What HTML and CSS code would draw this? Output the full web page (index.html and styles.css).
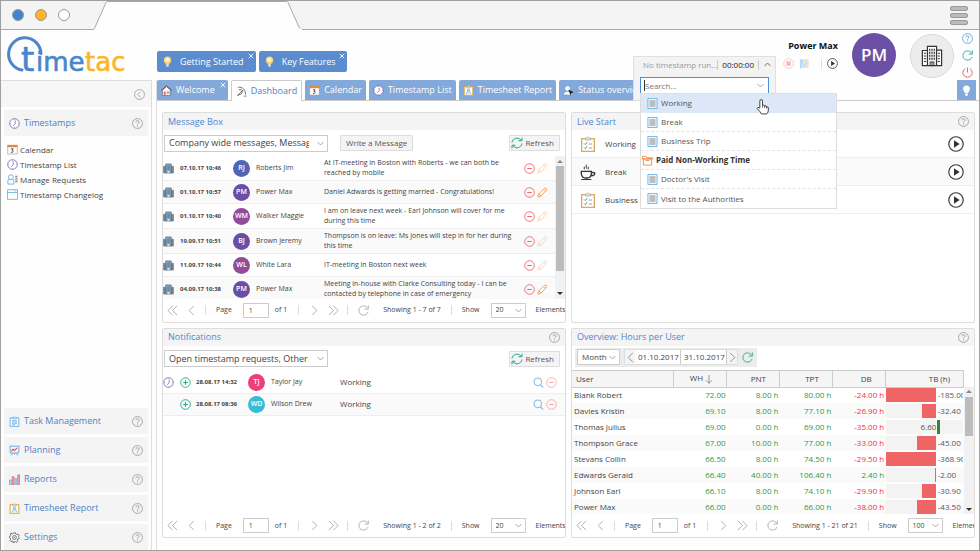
FILE: index.html
```html
<!DOCTYPE html>
<html lang="en">
<head>
<meta charset="utf-8">
<title>TimeTac Dashboard</title>
<link rel="stylesheet" href="styles.css">
</head>
<body>
<svg class="sprite" aria-hidden="true">
  <defs>
    <symbol id="clock" viewBox="0 0 24 24"><circle cx="12" cy="12" r="10.5" fill="#fff" stroke="#7c62b5" stroke-width="1.8"/><path d="M13.5 5.5v7L9 17" fill="none" stroke="#7c62b5" stroke-width="1.8"/><path d="M12 2v2M12 20v2M2 12h2M20 12h2" stroke="#7c62b5"/></symbol>
    <symbol id="calendar" viewBox="0 0 24 24"><path d="M1.5 3h21v19h-21z" fill="#fff" stroke="#999" stroke-width="1.4"/><path d="M1 2h22v5H1z" fill="#e08a3c"/><path d="M9 10.500h4.500l-2.500 3.200c4 0 4 5.300-2.500 4.300" fill="none" stroke="#444" stroke-width="2"/></symbol>
    <symbol id="requests" viewBox="0 0 24 24"><circle cx="8.500" cy="7" r="5.300" fill="#fff" stroke="#58a6dd" stroke-width="1.800"/><path d="M2 22v-7q0-3 3-3h7q3 0 3 3v7z" fill="#fff" stroke="#58a6dd" stroke-width="1.800"/><path d="M18 5h5M18 9h5M18 13h5M18 17h5" stroke="#666" stroke-width="2"/></symbol>
    <symbol id="window" viewBox="0 0 24 24"><path d="M1 1.500h22v21H1zM1 7.500h22" fill="#fff" stroke="#58b0e0" stroke-width="1.800"/><path d="M17 4.500h3" stroke="#58b0e0" stroke-width="1.500"/></symbol>
    <symbol id="tasks" viewBox="0 0 24 24"><path d="M2.500 4h19v18.500h-19z" fill="#fff" stroke="#58a6dd" stroke-width="1.800"/><path d="M8 6V3h2q2-3 4 0h2v3z" fill="#fff" stroke="#58a6dd" stroke-width="1.500"/><path d="M6.500 10h11M6.500 13h11M6.500 16h11M6.500 19h7" stroke="#58a6dd" stroke-width="1.600"/></symbol>
    <symbol id="planning" viewBox="0 0 24 24"><path d="M1 2.500h22M2.500 3v14.500h19V3M8 18l-3 5M16 18l3 5M12 18v3" fill="none" stroke="#58a6dd" stroke-width="1.900"/><path d="M5 13.500l4-4.500 3 3 6-6" fill="none" stroke="#e33d3d" stroke-width="2.200"/></symbol>
    <symbol id="reports" viewBox="0 0 24 24"><g stroke-width="1.600"><path d="M1 13h4v10H1z" fill="#c8e1f4" stroke="#58a6dd"/><path d="M7 6h4v17H7z" fill="#f7b0b0" stroke="#e85b5b"/><path d="M13 10h4v13h-4z" fill="#c8e1f4" stroke="#58a6dd"/><path d="M19 2h4v21h-4z" fill="#f7b0b0" stroke="#e85b5b"/></g></symbol>
    <symbol id="sheet" viewBox="0 0 24 24"><path d="M2.500 4h19v18.500h-19z" fill="#fff" stroke="#d9a441" stroke-width="2.200"/><path d="M8 6V3h2q2-3 4 0h2v3z" fill="#f3ddb0" stroke="#d9a441" stroke-width="1.300"/><circle cx="12" cy="11" r="2.700" fill="#e1effa" stroke="#58a6dd" stroke-width="1.500"/><path d="M7.500 20q0-6 4.500-6t4.500 6" fill="#e1effa" stroke="#58a6dd" stroke-width="1.500"/></symbol>
    <symbol id="gear" viewBox="0 0 24 24"><path d="M10 1.500h4l.7 3 2.300 1 2.700-1.700 2.700 2.700L20.700 9l1 2.300v3.400l-3 .8-1 2.300 1.500 2.500-2.700 2-2.500-1.800-2 .7-.7 1.600h-2.600L9 20l-2.300-1-2.500 1.500-2-2.500 1.500-2.700-1-2.300-1.500-.7v-2.600l2-.7 1-2.300L2.600 4.200l2-2L7 4l2.300-1z" transform="translate(0 .3)" fill="#fff" stroke="#555" stroke-width="1.800" stroke-linejoin="round"/><circle cx="12" cy="12" r="4.200" fill="#fff" stroke="#555" stroke-width="1.800"/><circle cx="12" cy="12" r="1.300" fill="#555"/></symbol>
    <symbol id="help" viewBox="0 0 24 24"><circle cx="12" cy="12" r="10.800" fill="none" stroke="currentColor" stroke-width="1.800"/><path d="M8.500 9.500c0-5 7.200-4.500 7-.3-.2 2.600-3.400 2.400-3.400 5.300" fill="none" stroke="currentColor" stroke-width="2"/><circle cx="12.100" cy="17.700" r="1.400" fill="currentColor"/></symbol>
    <symbol id="collapse" viewBox="0 0 24 24"><circle cx="12" cy="12" r="10.800" fill="none" stroke="currentColor" stroke-width="1.700"/><path d="M14 6l-6 6 6 6" fill="none" stroke="currentColor" stroke-width="1.800"/></symbol>
    <symbol id="bulb" viewBox="0 0 24 24"><circle cx="12" cy="9" r="8" fill="#fbd276"/><path d="M8 14h8l-1 5H9z" fill="#fbd276"/><circle cx="12" cy="8.500" r="4.500" fill="#fff3c9"/><path d="M9 18h6v4l-2 1.500h-2L9 22z" fill="#eee"/><path d="M9 20h6" stroke="#999"/></symbol>
    <symbol id="bulbw" viewBox="0 0 24 24"><path d="M8.500 18c0-4-4-5-4-10 0-9.500 15-9.500 15 0 0 5-4 6-4 10zM9 19h6v3l-2 2h-2l-2-2z" fill="#fff"/></symbol>
    <symbol id="home" viewBox="0 0 24 24"><path d="M3 11l9-8 9 8v12H3z" fill="#fff" stroke="#666" stroke-width="1.500"/><path d="M1 12L12 2l11 10" fill="none" stroke="#8f5a55" stroke-width="2.500"/><path d="M6 14h4v9H6z" fill="#e46a5a"/><path d="M13 14h6v5h-6z" fill="#a9cef0" stroke="#d76" /></symbol>
    <symbol id="dash" viewBox="0 0 24 24"><path d="M4 3C14 1 21 8 21 19M6 8q7-1 10 4M3 21L14 10M3 21l9-4 2-7" fill="none" stroke="#555" stroke-width="1.700"/><path d="M17 22h6" stroke="#555" stroke-width="1.500"/></symbol>
    <symbol id="status" viewBox="0 0 24 24"><circle cx="10" cy="7.500" r="6" fill="#fff" stroke="#4d9bd8" stroke-width="1.300"/><path d="M1 22q0-8 9-8t9 8z" fill="#fff" stroke="#4d9bd8" stroke-width="1.300"/><path d="M12 10l11 6-5 2-2 5z" fill="#222"/></symbol>
    <symbol id="company" viewBox="0 0 24 24"><path d="M1 7h6v15H1zM17 7h6v15h-6z" fill="#77828c" stroke="#5f6870"/><path d="M6 2h12v20H6z" fill="#88a9c4" stroke="#5f6870" stroke-width="1.500"/><path d="M9 5v12M12 5v12M15 5v12" stroke="#4f7190" stroke-width="1.200"/><path d="M10 17h4v5h-4z" fill="#ddd"/></symbol>
    <symbol id="refresh" viewBox="0 0 24 24"><path d="M2 11C3 3 14-1 20 6M22 1v6.500h-7M22 13c-1 8-12 12-18 5M2 23v-6.500h7" fill="none" stroke="#25a68c" stroke-width="2"/></symbol>
    <symbol id="reload" viewBox="0 0 24 24"><path d="M21.500 7.500C17-1 2 .5 2 12c0 12 17 13.500 20 3M22.500 1v8h-8" fill="none" stroke="currentColor" stroke-width="1.900"/></symbol>
    <symbol id="minus" viewBox="0 0 24 24"><circle cx="12" cy="12" r="10.500" fill="none" stroke="#f0666a" stroke-width="2"/><path d="M7 12h10" stroke="#f0666a" stroke-width="2.300"/></symbol>
    <symbol id="plus" viewBox="0 0 24 24"><circle cx="12" cy="12" r="10.500" fill="none" stroke="#27a58b" stroke-width="2"/><path d="M7 12h10M12 7v10" stroke="#27a58b" stroke-width="2.500"/></symbol>
    <symbol id="pencil" viewBox="0 0 24 24"><path d="M2 22l2-7L17 2.500q4-1 4.500 3.500L9 19.500zM14.500 5l4.500 4.500M4 15l5 4.500" fill="#fff" stroke="#f1974c" stroke-width="1.900"/></symbol>
    <symbol id="search" viewBox="0 0 24 24"><circle cx="10.500" cy="10.500" r="8.500" fill="none" stroke="#77b1e6" stroke-width="2"/><path d="M16.500 17l5.500 5.500" stroke="#77b1e6" stroke-width="2.200"/></symbol>
    <symbol id="play" viewBox="0 0 24 24"><circle cx="12" cy="12" r="10.800" fill="#fff" stroke="#333" stroke-width="1.700"/><path d="M9 6.500l8.500 5.500L9 17.500z" fill="#333"/></symbol>
    <symbol id="check" viewBox="0 0 24 24"><path d="M2.500 4h19v19h-19z" fill="#fff" stroke="#d9ab60" stroke-width="2"/><path d="M8 6V3h2q2-4 4 0h2v3z" fill="#f6e4c4" stroke="#aaa" stroke-width="1.200"/><path d="M6 11l2 2 3-4M6 17l2 2 3-4" fill="none" stroke="#35b59a" stroke-width="1.500"/><path d="M13 12h5M13 18h5" stroke="#999" stroke-width="1.400"/></symbol>
    <symbol id="cup" viewBox="0 0 24 24"><path d="M2 11h15v4q-1 6-6 6H8q-5 0-6-6zM17 13q6-1 5 2-1 3-6 2.500M2 23.500h15" fill="none" stroke="#333" stroke-width="2"/><path d="M7 8q-2-2 0-4M10 7q-2-3 0-6M13 8q-2-2 0-4" fill="none" stroke="#333" stroke-width="1.400"/></symbol>
    <symbol id="task" viewBox="0 0 24 24"><path d="M2 1h20v22H2z" fill="#eef6fd" stroke="#6bb0e6" stroke-width="2"/><path d="M5.500 4.500h13v15h-13z" fill="#bdbdbd"/></symbol>
    <symbol id="folder" viewBox="0 0 24 24"><path d="M3 8v14h18V8zM1 3h8l2 3h12v3H1zM8 12h8" fill="#fff" stroke="#f08c45" stroke-width="2"/></symbol>
    <symbol id="power" viewBox="0 0 24 24"><path d="M7 3.500C-2 9 1 22 12 22S26 9 17 3.500M12 1v11" fill="none" stroke="#ef5f60" stroke-width="2.100"/></symbol>
    <symbol id="stop" viewBox="0 0 24 24"><circle cx="12" cy="12" r="10.500" fill="#fff" stroke="#f7c4c5" stroke-width="2"/><path d="M7 7h10v10H7z" fill="#f7b9ba"/></symbol>
    <symbol id="edit" viewBox="0 0 24 24"><path d="M2 3h8v20H2z" fill="#b9daf1"/><path d="M9 2h12v20H8z" fill="#f6dfc6"/><path d="M7 18L17 5l4 3L11 21l-5 2z" fill="#b4d6ef" stroke="#fff" stroke-width="1.500"/></symbol>
    <symbol id="building" viewBox="0 0 24 24"><path d="M7 1.500h10v21H7zM1.500 6H7M1.500 5.500v17h21v-17H17" fill="#fff" stroke="#333" stroke-width="1.300"/><path d="M9.500 4v13M12 4v13M14.500 4v13M3.200 9h2.500M3.200 12h2.500M3.200 15h2.500M3.200 18h2.500M18.300 9h2.500M18.300 12h2.500M18.300 15h2.500M18.300 18h2.500" stroke="#333" stroke-width="1.300" stroke-dasharray="2.300 1"/><path d="M10 18.500h4v4h-4zM12 18.500v4" fill="none" stroke="#333"/></symbol>
    <symbol id="down" viewBox="0 0 12 12"><path d="M1 3.500l5 5 5-5" fill="none" stroke="currentColor" stroke-width="1.500"/></symbol>
    <symbol id="up" viewBox="0 0 12 12"><path d="M1 8.500l5-5 5 5" fill="none" stroke="currentColor" stroke-width="1.600"/></symbol>
    <symbol id="prev" viewBox="0 0 12 12"><path d="M8.500 1l-5 5 5 5" fill="none" stroke="currentColor"/></symbol>
    <symbol id="next" viewBox="0 0 12 12"><path d="M3.500 1l5 5-5 5" fill="none" stroke="currentColor"/></symbol>
    <symbol id="first" viewBox="0 0 12 12"><path d="M6 1L1 6l5 5M11 1L6 6l5 5" fill="none" stroke="currentColor"/></symbol>
    <symbol id="last" viewBox="0 0 12 12"><path d="M6 1l5 5-5 5M1 1l5 5-5 5" fill="none" stroke="currentColor"/></symbol>
    <symbol id="close" viewBox="0 0 12 12"><path d="M1.500 1.500l9 9M10.500 1.500l-9 9" stroke="#fff" stroke-width="1.800"/></symbol>
  </defs>
</svg>

<div class="browser">
  <svg class="browser-tab" viewBox="0 0 210 29" aria-hidden="true"><path d="M0 28.500L1 28.500 13 1.500Q13.500.500 15 .500H193Q194.500.500 195 1.500L206 26Q207 28.500 209 28.500" fill="#fefefe" stroke="#a8a8a8"/><path d="M1 28.500h208" stroke="#fefefe" stroke-width="1.500"/></svg>
  <span class="dot blue"></span><span class="dot amber"></span><span class="dot white"></span>
  <span class="burger"><i></i><i></i><i></i></span>
</div>

<div class="app">
  <header class="header">
    <a class="logo" href="#" aria-label="timetac">
      <svg viewBox="0 0 120 40" role="img" aria-label="timetac">
        <path d="M15 35A16.200 16.200 0 1 1 34 18.500" fill="none" stroke="#4a86cb" stroke-width="3" stroke-linecap="round"/>
        <text x="14" y="36" class="logo-t">t</text>
        <text x="29" y="36" class="logo-ime">ime</text>
        <text x="78" y="36" class="logo-tac">tac</text>
      </svg>
    </a>
    <div class="guides">
      <button class="guide"><svg class="ic"><use href="#bulb"/></svg>Getting Started<svg class="x"><use href="#close"/></svg></button>
      <button class="guide"><svg class="ic"><use href="#bulb"/></svg>Key Features<svg class="x"><use href="#close"/></svg></button>
    </div>
    <div class="timer-slot">
      <section class="timer" aria-label="Timer">
        <div class="timer-head"><span class="timer-state">No timestamp run...</span><span class="timer-clock">00:00:00</span><button class="plain" aria-label="Close timer"><svg class="chev"><use href="#up"/></svg></button></div>
        <div class="combo"><input type="text" placeholder="Search..." aria-label="Search task"><svg class="chev"><use href="#down"/></svg></div>
        <ul class="options">
          <li class="option active"><svg class="ic"><use href="#task"/></svg>Working</li>
          <li class="option"><svg class="ic"><use href="#task"/></svg>Break</li>
          <li class="option"><svg class="ic"><use href="#task"/></svg>Business Trip</li>
          <li class="option group"><svg class="ic"><use href="#folder"/></svg>Paid Non-Working Time</li>
          <li class="option"><svg class="ic"><use href="#task"/></svg>Doctor's Visit</li>
          <li class="option"><svg class="ic"><use href="#task"/></svg>Visit to the Authorities</li>
        </ul>
        <svg class="hand" viewBox="0 0 24 30" aria-hidden="true"><path d="M7 17V4q0-3 2.500-3T12 4v8q3-2 4 1 3-1 3.500 1.500Q23 14 23 17v4q0 4-3 7H10q-2-4-8-10 0-4 5-1z" fill="#fff" stroke="#333" stroke-width="1.700" stroke-linejoin="round"/><path d="M12 12v4M16 13v4M19.500 14.500V18" stroke="#333" stroke-width="1.400"/></svg>
      </section>
    </div>
    <div class="user">
      <strong>Power Max</strong>
      <div class="controls"><button class="plain" aria-label="Stop"><svg class="ic"><use href="#stop"/></svg></button><button class="plain" aria-label="Edit"><svg class="ic"><use href="#edit"/></svg></button><span class="rule"></span><button class="plain" aria-label="Start"><svg class="ic"><use href="#play"/></svg></button></div>
    </div>
    <span class="face">PM</span>
    <span class="firm"><svg><use href="#building"/></svg></span>
    <div class="tools">
      <button class="plain t-blue" aria-label="Help"><svg class="ic"><use href="#help"/></svg></button>
      <button class="plain t-green" aria-label="Reload"><svg class="ic"><use href="#reload"/></svg></button>
      <button class="plain" aria-label="Log out"><svg class="ic"><use href="#power"/></svg></button>
    </div>
  </header>

  <div class="main">
    <nav class="side">
      <div class="side-top"><button class="plain grey" aria-label="Collapse"><svg class="ic"><use href="#collapse"/></svg></button></div>
      <div class="module"><svg class="ic"><use href="#clock"/></svg><a href="#">Timestamps</a><svg class="ic grey"><use href="#help"/></svg></div>
      <ul class="links">
        <li><svg class="ic"><use href="#calendar"/></svg><a href="#">Calendar</a></li>
        <li><svg class="ic"><use href="#clock"/></svg><a href="#">Timestamp List</a></li>
        <li><svg class="ic"><use href="#requests"/></svg><a href="#">Manage Requests</a></li>
        <li><svg class="ic"><use href="#window"/></svg><a href="#">Timestamp Changelog</a></li>
      </ul>
      <div class="module"><svg class="ic"><use href="#tasks"/></svg><a href="#">Task Management</a><svg class="ic grey"><use href="#help"/></svg></div>
      <div class="module"><svg class="ic"><use href="#planning"/></svg><a href="#">Planning</a><svg class="ic grey"><use href="#help"/></svg></div>
      <div class="module"><svg class="ic"><use href="#reports"/></svg><a href="#">Reports</a><svg class="ic grey"><use href="#help"/></svg></div>
      <div class="module"><svg class="ic"><use href="#sheet"/></svg><a href="#">Timesheet Report</a><svg class="ic grey"><use href="#help"/></svg></div>
      <div class="module"><svg class="ic"><use href="#gear"/></svg><a href="#">Settings</a><svg class="ic grey"><use href="#help"/></svg></div>
    </nav>

    <div class="content">
      <div class="tabs">
        <button class="tab closable"><svg class="ic"><use href="#home"/></svg>Welcome<svg class="x"><use href="#close"/></svg></button>
        <button class="tab current"><svg class="ic"><use href="#dash"/></svg>Dashboard</button>
        <button class="tab"><svg class="ic"><use href="#calendar"/></svg>Calendar</button>
        <button class="tab"><svg class="ic"><use href="#clock"/></svg>Timestamp List</button>
        <button class="tab"><svg class="ic"><use href="#sheet"/></svg>Timesheet Report</button>
        <button class="tab"><svg class="ic"><use href="#status"/></svg>Status overview</button>
        <button class="tab tip" aria-label="Tips"><svg class="ic"><use href="#bulbw"/></svg></button>
      </div>

      <div class="board">
        <section class="panel">
          <h2>Message Box</h2>
          <div class="bar">
            <label class="pick wide"><select aria-label="Message filter"><option>Company wide messages, Messages to me</option></select><svg class="chev"><use href="#down"/></svg></label>
            <button class="btn">Write a Message</button>
            <button class="btn end"><svg class="ic"><use href="#refresh"/></svg>Refresh</button>
          </div>
          <div class="scroller">
            <ul class="messages">
              <li><svg class="ic"><use href="#company"/></svg><time>07.10.17 10:46</time><span class="pic indigo">RJ</span><span class="who">Roberts Jim</span><p>At IT-meeting in Boston with Roberts - we can both be reached by mobile</p><svg class="ic"><use href="#minus"/></svg><svg class="ic dim"><use href="#pencil"/></svg></li>
              <li><svg class="ic"><use href="#company"/></svg><time>01.10.17 10:57</time><span class="pic violet">PM</span><span class="who">Power Max</span><p>Daniel Adwards is getting married - Congratulations!</p><svg class="ic"><use href="#minus"/></svg><svg class="ic"><use href="#pencil"/></svg></li>
              <li><svg class="ic"><use href="#company"/></svg><time>01.10.17 10:40</time><span class="pic plum">WM</span><span class="who">Walker Maggie</span><p>I am on leave next week - Earl Johnson will cover for me during this time</p><svg class="ic"><use href="#minus"/></svg><svg class="ic dim"><use href="#pencil"/></svg></li>
              <li><svg class="ic"><use href="#company"/></svg><time>19.09.17 10:51</time><span class="pic violet">BJ</span><span class="who">Brown Jeremy</span><p>Thompson is on leave: Ms Jones will step in for her during this time</p><svg class="ic"><use href="#minus"/></svg><svg class="ic dim"><use href="#pencil"/></svg></li>
              <li><svg class="ic"><use href="#company"/></svg><time>11.09.17 10:44</time><span class="pic plum">WL</span><span class="who">White Lara</span><p>IT-meeting in Boston next week</p><svg class="ic"><use href="#minus"/></svg><svg class="ic dim"><use href="#pencil"/></svg></li>
              <li><svg class="ic"><use href="#company"/></svg><time>04.09.17 10:38</time><span class="pic violet">PM</span><span class="who">Power Max</span><p>Meeting in-house with Clarke Consulting today - I can be contacted by telephone in case of emergency</p><svg class="ic"><use href="#minus"/></svg><svg class="ic"><use href="#pencil"/></svg></li>
            </ul>
            <div class="track"><span class="arrow top"></span><span class="thumb long"></span><span class="arrow bottom"></span></div>
          </div>
          <div class="pager">
            <button class="plain" aria-label="First"><svg class="nav"><use href="#first"/></svg></button><button class="plain" aria-label="Previous"><svg class="nav"><use href="#prev"/></svg></button><span class="rule"></span>
            <label class="page">Page<input type="text" value="1"></label><span class="of">of 1</span><span class="rule"></span>
            <button class="plain" aria-label="Next"><svg class="nav"><use href="#next"/></svg></button><button class="plain" aria-label="Last"><svg class="nav"><use href="#last"/></svg></button><span class="rule"></span>
            <button class="plain" aria-label="Reload"><svg class="ic"><use href="#reload"/></svg></button><span class="showing">Showing 1 - 7 of 7</span><span class="rule"></span>
            <label class="page show">Show<span class="pick"><select><option>20</option></select><svg class="chev"><use href="#down"/></svg></span></label><span class="units">Elements</span>
          </div>
        </section>

        <section class="panel">
          <h2>Live Start<svg class="ic grey"><use href="#help"/></svg></h2>
          <ul class="starts">
            <li><svg class="ic"><use href="#check"/></svg><span>Working</span><button class="plain" aria-label="Start Working"><svg class="ic go"><use href="#play"/></svg></button></li>
            <li><svg class="ic"><use href="#cup"/></svg><span>Break</span><button class="plain" aria-label="Start Break"><svg class="ic go"><use href="#play"/></svg></button></li>
            <li><svg class="ic"><use href="#check"/></svg><span>Business Trip</span><button class="plain" aria-label="Start Business Trip"><svg class="ic go"><use href="#play"/></svg></button></li>
          </ul>
        </section>

        <section class="panel">
          <h2>Notifications<svg class="ic grey"><use href="#help"/></svg></h2>
          <div class="bar">
            <label class="pick wide"><select aria-label="Notification filter"><option>Open timestamp requests, Other requests</option></select><svg class="chev"><use href="#down"/></svg></label>
            <button class="btn end"><svg class="ic"><use href="#refresh"/></svg>Refresh</button>
          </div>
          <ul class="notes">
            <li><svg class="ic"><use href="#clock"/></svg><svg class="ic"><use href="#plus"/></svg><time>28.08.17 14:32</time><span class="pic pink">TJ</span><span class="who">Taylor Jay</span><p>Working</p><svg class="ic"><use href="#search"/></svg><svg class="ic faint"><use href="#minus"/></svg></li>
            <li><span></span><svg class="ic"><use href="#plus"/></svg><time>28.08.17 08:36</time><span class="pic cyan">WD</span><span class="who">Wilson Drew</span><p>Working</p><svg class="ic"><use href="#search"/></svg><svg class="ic faint"><use href="#minus"/></svg></li>
          </ul>
          <div class="pager">
            <button class="plain" aria-label="First"><svg class="nav"><use href="#first"/></svg></button><button class="plain" aria-label="Previous"><svg class="nav"><use href="#prev"/></svg></button><span class="rule"></span>
            <label class="page">Page<input type="text" value="1"></label><span class="of">of 1</span><span class="rule"></span>
            <button class="plain" aria-label="Next"><svg class="nav"><use href="#next"/></svg></button><button class="plain" aria-label="Last"><svg class="nav"><use href="#last"/></svg></button><span class="rule"></span>
            <button class="plain" aria-label="Reload"><svg class="ic"><use href="#reload"/></svg></button><span class="showing">Showing 1 - 2 of 2</span><span class="rule"></span>
            <label class="page show">Show<span class="pick"><select><option>20</option></select><svg class="chev"><use href="#down"/></svg></span></label><span class="units">Elements</span>
          </div>
        </section>

        <section class="panel">
          <h2>Overview: Hours per User<svg class="ic grey"><use href="#help"/></svg></h2>
          <div class="range">
            <label class="pick"><select aria-label="Period"><option>Month</option></select><svg class="chev"><use href="#down"/></svg></label>
            <div class="dates"><button class="plain" aria-label="Earlier"><svg class="nav"><use href="#prev"/></svg></button><input type="text" value="01.10.2017" aria-label="From"><input type="text" value="31.10.2017" aria-label="To"><button class="plain" aria-label="Later"><svg class="nav"><use href="#next"/></svg></button></div>
            <button class="plain t-green" aria-label="Reload"><svg class="ic"><use href="#reload"/></svg></button>
          </div>
          <div class="scroller">
            <table class="hours">
              <thead><tr><th>User</th><th>WH<svg class="sort" viewBox="0 0 10 12"><path d="M5 0v11M1 7l4 4 4-4" fill="none" stroke="#777"/></svg></th><th>PNT</th><th>TPT</th><th>DB</th><th>TB (h)</th></tr></thead>
              <tbody>
                <tr><td>Blank Robert</td><td>72.00</td><td>8.00 h</td><td>80.00 h</td><td class="neg">-24.00 h</td><td><div class="balance"><span class="lane"><i style="width:100%"></i></span><b>-185.00</b></div></td></tr>
                <tr><td>Davies Kristin</td><td>69.10</td><td>8.00 h</td><td>77.10 h</td><td class="neg">-26.90 h</td><td><div class="balance"><span class="lane"><i style="width:28%"></i></span><b>-32.40</b></div></td></tr>
                <tr><td>Thomas Julius</td><td>69.00</td><td>0.00 h</td><td>69.00 h</td><td class="neg">-35.00 h</td><td><div class="balance plus"><span class="lane">6.60</span><b><i style="width:12%"></i></b></div></td></tr>
                <tr><td>Thompson Grace</td><td>67.00</td><td>10.00 h</td><td>77.00 h</td><td class="neg">-33.00 h</td><td><div class="balance"><span class="lane"><i style="width:38%"></i></span><b>-45.00</b></div></td></tr>
                <tr><td>Stevans Collin</td><td>66.50</td><td>8.00 h</td><td>74.50 h</td><td class="neg">-29.50 h</td><td><div class="balance"><span class="lane"><i style="width:100%"></i></span><b>-368.90</b></div></td></tr>
                <tr><td>Edwards Gerald</td><td>66.40</td><td>40.00 h</td><td>106.40 h</td><td>2.40 h</td><td><div class="balance"><span class="lane"><i style="width:2%"></i></span><b>-2.00</b></div></td></tr>
                <tr><td>Johnson Earl</td><td>66.10</td><td>8.00 h</td><td>74.10 h</td><td class="neg">-29.90 h</td><td><div class="balance"><span class="lane"><i style="width:27%"></i></span><b>-30.90</b></div></td></tr>
                <tr><td>Power Max</td><td>66.00</td><td>0.00 h</td><td>66.00 h</td><td class="neg">-38.00 h</td><td><div class="balance"><span class="lane"><i style="width:37%"></i></span><b>-43.50</b></div></td></tr>
              </tbody>
            </table>
            <div class="track below"><span class="arrow top"></span><span class="thumb short"></span><span class="arrow bottom"></span></div>
          </div>
          <div class="pager">
            <button class="plain" aria-label="First"><svg class="nav"><use href="#first"/></svg></button><button class="plain" aria-label="Previous"><svg class="nav"><use href="#prev"/></svg></button><span class="rule"></span>
            <label class="page">Page<input type="text" value="1"></label><span class="of">of 1</span><span class="rule"></span>
            <button class="plain" aria-label="Next"><svg class="nav"><use href="#next"/></svg></button><button class="plain" aria-label="Last"><svg class="nav"><use href="#last"/></svg></button><span class="rule"></span>
            <button class="plain" aria-label="Reload"><svg class="ic"><use href="#reload"/></svg></button><span class="showing">Showing 1 - 21 of 21</span><span class="rule"></span>
            <label class="page show">Show<span class="pick"><select><option>100</option></select><svg class="chev"><use href="#down"/></svg></span></label><span class="units">Elements</span>
          </div>
        </section>
      </div>
    </div>
  </div>
</div>
</body>
</html>
```
FILE: styles.css
```css
* { box-sizing: border-box; }
body { margin: 0; height: 100vh; display: flex; flex-direction: column; background: #fefefe; color: #444; font: 8px/10px "Open Sans", "Noto Sans", sans-serif; border: 1px solid #a0a0a0; overflow: hidden; }
ul { list-style: none; margin: 0; padding: 0; }
p, h2 { margin: 0; font-weight: 400; }
a { color: inherit; text-decoration: none; }
button, input, select { font: inherit; color: inherit; margin: 0; }
svg { display: block; flex: none; }
.sprite { position: absolute; width: 0; height: 0; }
.ic { width: 11px; height: 11px; }
.chev { width: 7px; height: 7px; color: #999; }
.nav { width: 11px; height: 11px; }
.grey { color: #999; }
.plain { border: 0; padding: 0; background: none; display: flex; align-items: center; justify-content: center; }
.rule { width: 1px; height: 10px; background: #ddd; }

/* Browser frame */
.browser { flex: none; position: relative; display: flex; align-items: center; gap: 11px; height: 29px; padding: 0 11px; background: #f4f4f4; border-bottom: 1px solid #a8a8a8; }
.browser-tab { position: absolute; left: 92px; top: 0; width: 210px; height: 29px; }
.dot { width: 12px; height: 12px; border-radius: 50%; border: 1px solid #999; }
.blue { background: #4283cf; }
.amber { background: #fdb528; }
.white { background: #fff; }
.burger { margin-left: auto; display: grid; gap: 2px; }
.burger i { width: 18px; height: 5px; background: #bbb; border: 1px solid #999; border-radius: 2px; }

.app { flex: 1; min-height: 0; display: flex; flex-direction: column; }

/* Header */
.header { flex: none; display: flex; height: 50px; padding: 0 3px 0 6px; }
.logo { width: 120px; padding-top: 5px; }
.logo svg { width: 120px; height: 40px; overflow: visible; }
.logo-t, .logo-ime, .logo-tac { font: 26px "DejaVu Sans", sans-serif; fill: #4a86cb; stroke: #4a86cb; stroke-width: .6; stroke-linejoin: round; }
.logo-t { font-size: 34px; }
.logo-tac { fill: #fdb528; stroke: #fdb528; }
.guides { display: flex; align-items: flex-start; gap: 3px; margin: 21px auto 0 30px; }
.guide { position: relative; display: flex; align-items: center; gap: 7px; height: 21px; padding: 0 12px 0 5px; border: 0; border-radius: 2px; background: #5b8ccf; color: #fff; font-size: 9px; }
.x { position: absolute; right: 2px; top: 2px; width: 6px; height: 6px; }
.timer-slot { position: relative; width: 143px; }
.timer { position: absolute; z-index: 2; left: 0; top: 26px; width: 143px; height: 45px; padding: 0 6px; background: #f3f3f3; border: 1px solid #e0e0e0; }
.timer-head { display: flex; align-items: center; height: 15px; margin-bottom: 5px; }
.timer-state { flex: 1; padding-left: 3px; color: #999; white-space: nowrap; overflow: hidden; }
.timer-clock { padding: 0 4px; border: solid #ccc; border-width: 0 1px; color: #222; }
.timer-head .plain { width: 16px; margin-right: -6px; }
.timer-head .chev { color: #666; }
.combo { display: flex; align-items: center; height: 17px; padding: 0 4px 0 3px; border: 1px solid #4a90d9; background: #fff; }
.combo input { flex: 1; min-width: 0; border: 0; padding: 0; outline: 0; background: none; border-left: 1px solid #333; height: 11px; }
.options { position: absolute; left: 6px; top: 36px; width: 197px; background: #fff; border: 1px solid #ddd; }
.option { display: flex; align-items: center; gap: 3px; height: 19px; padding-left: 6px; border-bottom: 1px dashed #e4e4e4; color: #555; }
.option:last-child { border: 0; }
.option.active { background: #dce7f7; border-color: #dce7f7; }
.option.group { padding-left: 1px; font-weight: 700; color: #333; }
.hand { position: absolute; left: 122px; top: 42px; width: 13px; height: 16px; }
.user { width: 55px; margin: 11px 14px 0 7px; text-align: right; color: #111; font-size: 9px; }
.controls { display: flex; align-items: center; justify-content: space-between; margin-top: 7px; }
.controls .rule { margin-left: 6px; }
.face, .firm { width: 44px; height: 44px; margin-top: 3px; border-radius: 50%; display: flex; align-items: center; justify-content: center; flex: none; }
.face { margin-right: 14px; background: #6c50a5; color: #fff; font-size: 17px; font-weight: 600; }
.firm { margin-right: 4px; margin-top: 4px; background: #ededed; border: 1px solid #d8d8d8; }
.firm svg { width: 22px; height: 22px; }
.tools { width: 18px; display: flex; flex-direction: column; align-items: center; gap: 6px; padding-top: 3px; }
.t-blue { color: #5a9fe0; }
.t-green { color: #25a68c; }

/* Sidebar */
.main { flex: 1; min-height: 0; display: grid; grid-template-columns: 151px minmax(0, 1fr); column-gap: 4px; }
.side { display: flex; flex-direction: column; gap: 3px; min-height: 0; border: solid #ddd; border-width: 1px 1px 0 0; }
.side-top { display: flex; align-items: center; justify-content: flex-end; height: 26px; flex: none; padding-right: 6px; background: #f6f6f6; }
.module { display: flex; align-items: center; gap: 4px; flex: none; height: 26px; margin: 0 3px; padding: 0 5px; background: #f4f4f4; color: #4f80c4; font-size: 9px; }
.module a { flex: 1; }
.links { flex: 1; padding: 3px 6px; }
.links li { display: flex; align-items: center; gap: 2px; height: 15px; }

/* Tabs */
.content { display: flex; flex-direction: column; min-width: 0; min-height: 0; border-left: 1px solid #ddd; }
.tabs { flex: none; display: flex; gap: 3px; height: 21px; padding-right: 3px; border-bottom: 1px solid #ccc; }
.tab { position: relative; display: flex; align-items: center; gap: 4px; height: 20px; padding: 0 4px; border: 0; border-radius: 2px 2px 0 0; background: #83a9db; color: #fff; font-size: 9px; white-space: nowrap; }
.closable { padding-right: 13px; }
.current { height: 21px; background: #fefefe; border: 1px solid #ccc; border-bottom: 0; color: #4f80c4; }
.tip { margin-left: auto; border-radius: 0; }

/* Panels */
.board { flex: 1; min-height: 0; display: grid; grid-template: minmax(0, 1fr) minmax(0, 1fr) / minmax(0, 1fr) minmax(0, 1fr); gap: 5px; padding: 11px 4px 12px 5px; }
.panel { display: flex; flex-direction: column; min-height: 0; overflow: hidden; border: 1px solid #ddd; border-radius: 2px; background: #fff; }
.panel h2 { flex: none; display: flex; align-items: center; justify-content: space-between; height: 17px; padding: 0 5px; background: #f4f4f4; color: #4f86cc; font-size: 9px; }
.bar { flex: none; display: flex; align-items: center; gap: 12px; height: 26px; padding: 0 5px 0 1px; }
.pick { position: relative; display: flex; align-items: center; height: 15px; }
.pick select { appearance: none; width: 100%; height: 100%; padding: 0 12px 0 4px; border: 1px solid #ccc; border-radius: 0; background: #fff; overflow: hidden; }
.pick .chev { position: absolute; right: 4px; pointer-events: none; }
.wide { width: 164px; height: 17px; }
.wide select { padding-right: 18px; font-size: 9px; }
.btn { display: flex; align-items: center; gap: 2px; height: 16px; padding: 0 5px; border: 1px solid #ddd; border-radius: 1px; background: #f4f4f4; color: #555; }
.end { margin-left: auto; padding: 0 5px 0 1px; }
.end .ic { width: 12px; height: 12px; }
.scroller { flex: 1; min-height: 0; display: flex; overflow: hidden; }
.messages { flex: 1; min-width: 0; font-size: 7px; }
.messages li { display: grid; grid-template-columns: 17px 53px 23px 68px minmax(0, 1fr) 13px 11px; align-items: center; min-height: 23px; padding: 2px 7px 2px 0; border-bottom: 1px solid #eee; }
.messages li:nth-child(even), .notes li:nth-child(even) { background: #fafafa; }
.messages p { padding-right: 2px; }
time { font-size: 6px; font-weight: 700; white-space: nowrap; }
.who { font-size: 7px; white-space: nowrap; }
.pic { width: 17px; height: 17px; border-radius: 50%; color: #fff; font-size: 7px; font-weight: 600; display: flex; align-items: center; justify-content: center; }
.indigo { background: #5066b3; }
.violet { background: #6a4ea3; }
.plum { background: #944b9b; }
.pink { background: #ef3e78; }
.cyan { background: #37bcd6; }
.dim { opacity: .4; }
.faint { opacity: .55; }
.track { flex: none; width: 10px; display: flex; flex-direction: column; background: #f1f1f1; }
.below { margin-top: 17px; }
.arrow { height: 10px; display: flex; align-items: center; justify-content: center; }
.arrow::before { content: ""; border: 3px solid transparent; }
.top::before { border-bottom-color: #888; border-top: 0; }
.bottom { margin-top: auto; }
.bottom::before { border-top-color: #333; border-bottom: 0; }
.thumb { margin: 0 1px; background: #bcbcbc; }
.long { height: 105px; }
.short { height: 39px; }

/* Paging bar */
.pager { flex: none; display: flex; align-items: center; height: 23px; padding-left: 4px; overflow: hidden; white-space: nowrap; color: #444; font-size: 7px; }
.pager .plain { color: #aaa; margin-right: 8px; }
.pager .rule { margin-right: 10px; flex: none; }
.pager .page { display: flex; align-items: center; gap: 11px; }
.pager input { width: 26px; height: 15px; padding: 0 5px; border: 1px solid #ccc; }
.of { margin: 0 11px 0 6px; }
.showing { margin: 0 10px 0 6px; }
.show .pick { width: 35px; }
.units { margin-left: 10px; }

.starts li { display: flex; align-items: center; height: 28px; padding: 0 10px 0 8px; border-bottom: 1px solid #eee; }
.starts li:nth-child(even) { background: #fafafa; }
.starts .ic { width: 16px; height: 16px; }
.starts span { flex: 1; padding-left: 9px; }

.notes { flex: 1; }
.notes li { display: grid; grid-template-columns: 17px 16px 52px 23px 69px minmax(0, 1fr) 13px 11px; align-items: center; height: 22px; padding: 0 8px 0 0; border-bottom: 1px solid #eee; }

.range { flex: none; align-self: flex-start; display: flex; align-items: center; gap: 4px; height: 19px; margin: 2px 3px 3px; padding: 0 4px 0 2px; background: #ececec; }
.range .pick { width: 43px; height: 16px; }
.dates { display: flex; height: 16px; border: 1px solid #ddd; background: #f4f4f4; color: #444; }
.dates .plain { width: 10px; color: #888; }
.dates input { width: 46px; padding: 0 1px 0 3px; border: 0; border-right: 1px solid #ccc; background: #fff; }

.hours { flex: 1; align-self: flex-start; border-collapse: collapse; table-layout: fixed; width: 100%; }
.hours th { height: 17px; padding: 0 13px 0 4px; background: #f5f5f5; border: solid #ccc; border-width: 1px 1px 1px 0; font-weight: 400; text-align: right; white-space: nowrap; }
.hours th:nth-child(1) { width: 26%; text-align: left; }
.hours th:nth-child(6) { width: 20%; }
.sort { display: inline-block; width: 8px; height: 9px; margin-left: 2px; vertical-align: middle; }
.hours td { height: 16px; padding: 0 1px; text-align: right; color: #2f9a3d; white-space: nowrap; }
.hours td:first-child { padding-left: 2px; text-align: left; color: #444; }
.hours tr:nth-child(even) td { background: #fafafa; }
.hours .neg { color: #ee3338; }
.balance { display: grid; grid-template-columns: 2fr 1fr; column-gap: 2px; height: 14px; line-height: 14px; color: #555; }
.lane { display: flex; justify-content: flex-end; background: #f3f3f3; }
.lane i { background: #ef6464; }
.balance b { font-weight: 400; text-align: left; overflow: hidden; }
.plus { column-gap: 1px; }
.plus b { display: flex; background: #f3f3f3; }
.plus b i { background: #2c8a35; }
```
